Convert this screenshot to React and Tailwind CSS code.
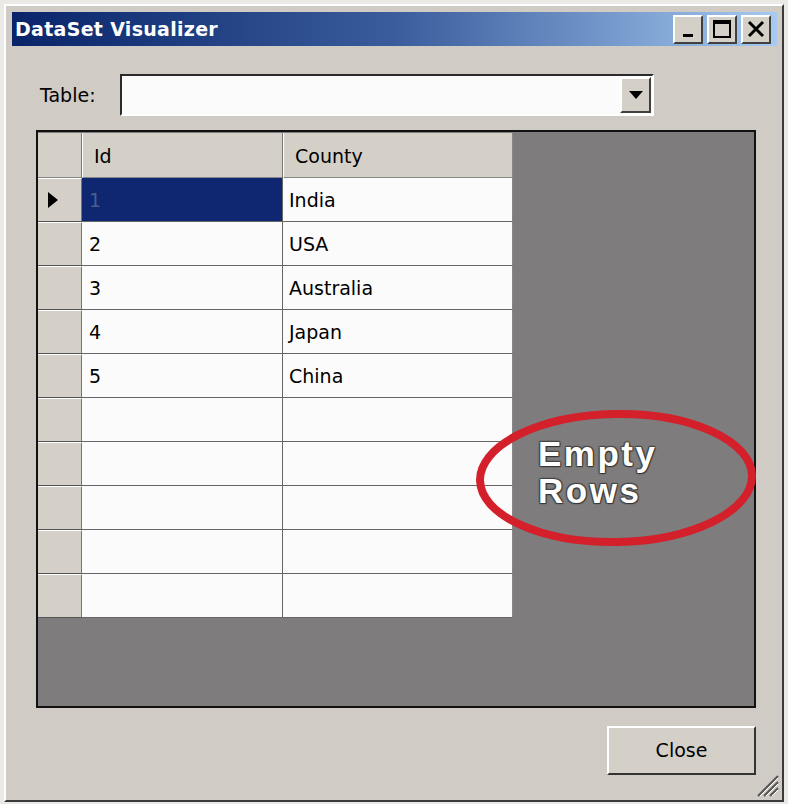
import React from 'react';

const rows = [
  { id: '1', country: 'India' },
  { id: '2', country: 'USA' },
  { id: '3', country: 'Australia' },
  { id: '4', country: 'Japan' },
  { id: '5', country: 'China' },
  { id: '', country: '' },
  { id: '', country: '' },
  { id: '', country: '' },
  { id: '', country: '' },
  { id: '', country: '' },
];

const font = { fontFamily: '"DejaVu Sans", Verdana, sans-serif' };

const TitleButton = ({ children }) => (
  <div className="w-[30px] h-[29px] bg-[#d4d0c8] border-t-2 border-l-2 border-t-white border-l-white border-r-2 border-b-2 border-r-[#404040] border-b-[#404040] flex items-center justify-center">
    {children}
  </div>
);

const App = () => {
  return (
    <div className="w-[788px] h-[804px] bg-[#ebe9e6] pt-[4px] pl-[4px] pr-[4px] pb-[2px]" style={font}>
      <div className="relative h-full flex flex-col bg-[#d0ccc5] border-l-2 border-t-2 border-l-white border-t-white border-r-2 border-b-2 border-r-[#3a3a3a] border-b-[#3a3a3a] pt-[6px] pl-[6px] pr-[5px]">
        {/* Title bar */}
        <div className="h-[34px] flex items-center justify-between pl-[3px] pr-[6px] bg-gradient-to-r from-[#0a246a] via-[#3a5c9c] to-[#a6caf0]">
          <span className="text-white font-bold text-[19px] tracking-[0.3px]">DataSet Visualizer</span>
          <div className="flex items-center gap-[4px]">
            <TitleButton>
              <div className="w-[10px] h-[3px] bg-black mt-[12px]" />
            </TitleButton>
            <TitleButton>
              <div className="w-[18px] h-[18px] border-2 border-black border-t-[4px]" />
            </TitleButton>
            <TitleButton>
              <svg width="18" height="18" viewBox="0 0 18 18">
                <path d="M2 2 L16 16 M16 2 L2 16" stroke="black" strokeWidth="3" />
              </svg>
            </TitleButton>
          </div>
        </div>

        {/* Table selector */}
        <div className="flex items-center mt-[28px] pl-[28px]">
          <span className="text-[19px] text-black w-[80px]">Table:</span>
          <div className="w-[534px] h-[42px] bg-[#fbfbfb] border-t-2 border-l-2 border-t-[#2a2a2a] border-l-[#2a2a2a] border-r-2 border-b-2 border-r-white border-b-white flex justify-end items-center pr-[1px]">
            <div className="w-[31px] h-[36px] bg-[#d4d0c8] border-t-2 border-l-2 border-t-white border-l-white border-r-2 border-b-2 border-r-[#404040] border-b-[#404040] flex items-center justify-center">
              <svg width="14" height="8" viewBox="0 0 14 8">
                <path d="M0 0 L14 0 L7 8 Z" fill="black" />
              </svg>
            </div>
          </div>
        </div>

        {/* Data grid */}
        <div className="relative mt-[14px] ml-[24px] w-[720px] h-[578px] bg-[#7e7c7d] border-2 border-[#111]">
          <div className="flex flex-col w-[476px] text-[19px] text-black">
            <div className="flex h-[46px] pt-[1px]">
              <div className="w-[44px] bg-[#d4d0c8] border-r border-[#777] border-b border-b-[#888]" />
              <div className="w-[201px] bg-[#d4d0c8] border-l border-l-white border-r border-r-[#777] border-b border-b-[#888] flex items-center pl-[11px] pt-[3px]">Id</div>
              <div className="w-[230px] bg-[#d4d0c8] border-l border-l-white border-r border-r-[#888] border-b border-b-[#888] flex items-center pl-[11px] pt-[3px]">County</div>
            </div>
            {rows.map((r, i) => (
              <div key={i} className="flex h-[44px]">
                <div className="w-[44px] bg-[#d4d0c8] border-t border-t-white border-r border-r-[#777] border-b border-b-[#555] flex items-center pl-[10px]">
                  {i === 0 && (
                    <svg width="10" height="16" viewBox="0 0 10 16">
                      <path d="M0 0 L10 8 L0 16 Z" fill="black" />
                    </svg>
                  )}
                </div>
                <div className={`w-[201px] border-r border-r-[#666] border-b border-b-[#666] flex items-center pl-[7px] pt-[2px] ${i === 0 ? 'bg-[#0e2770] text-[#4a5f8e]' : 'bg-[#fbfbfb]'}`}>
                  {r.id}
                </div>
                <div className="w-[230px] bg-[#fbfbfb] border-r border-r-[#888] border-b border-b-[#666] flex items-center pl-[6px] pt-[2px]">
                  {r.country}
                </div>
              </div>
            ))}
          </div>

          {/* Annotation */}
          <div className="absolute left-[437px] top-[276px] w-[284px] h-[140px]">
            <svg width="284" height="140" viewBox="0 0 284 140" className="absolute left-0 top-0">
              <ellipse cx="141" cy="70" rx="136" ry="64" fill="none" stroke="#d3202b" strokeWidth="8" transform="rotate(-1 141 70)" />
            </svg>
            <div
              className="absolute left-[63px] top-[27px] text-white font-bold text-[35px] leading-[37px] tracking-[2.5px]"
              style={{ fontFamily: '"Liberation Sans", Arial, sans-serif', textShadow: '1px 1px 1px #333, -1px -1px 1px #444, 1px -1px 1px #444, -1px 1px 1px #444' }}
            >
              <div>Empty</div>
              <div>Rows</div>
            </div>
          </div>
        </div>

        {/* Close button */}
        <div className="flex justify-end mt-[18px] pr-[21px]">
          <div className="w-[149px] h-[49px] bg-[#d4d0c8] border-t-2 border-l-2 border-t-white border-l-white border-r-2 border-b-2 border-r-[#333] border-b-[#333] flex items-center justify-center text-[19px] text-black">
            Close
          </div>
        </div>

        {/* Resize grip */}
        <svg width="24" height="24" viewBox="0 0 24 24" className="absolute right-[3px] bottom-[3px]">
          <path d="M23 3 L3 23 M23 9 L9 23 M23 15 L15 23" stroke="#555" strokeWidth="2" />
          <path d="M23 5 L5 23 M23 11 L11 23 M23 17 L17 23" stroke="#fff" strokeWidth="1" />
        </svg>
      </div>
    </div>
  );
};

export default App;
